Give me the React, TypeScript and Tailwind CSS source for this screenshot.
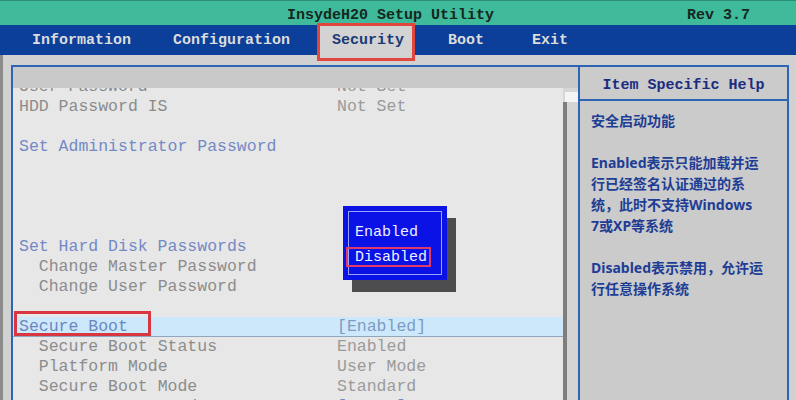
import React from "react";

const mono = { fontFamily: '"Liberation Mono", "DejaVu Sans Mono", monospace' };
const cjk = { fontFamily: '"Noto Sans", "Noto Sans CJK SC", sans-serif' };

type Row = { label?: string; value?: string; kind?: "blue" | "grey" | "sel"; indent?: boolean };

const rows: Row[] = [
  { label: "User Password", value: "Not Set", kind: "grey" },
  { label: "HDD Password IS", value: "Not Set", kind: "grey" },
  {},
  { label: "Set Administrator Password", kind: "blue" },
  {},
  {},
  {},
  {},
  { label: "Set Hard Disk Passwords", kind: "blue" },
  { label: "Change Master Password", kind: "grey", indent: true },
  { label: "Change User Password", kind: "grey", indent: true },
  {},
  { label: "Secure Boot", value: "[Enabled]", kind: "sel" },
  { label: "Secure Boot Status", value: "Enabled", kind: "grey", indent: true },
  { label: "Platform Mode", value: "User Mode", kind: "grey", indent: true },
  { label: "Secure Boot Mode", value: "Standard", kind: "grey", indent: true },
  { label: "Reset to Setup Mode", value: "[Enter]", kind: "blue" },
];

function ListRow({ r }: { r: Row }) {
  const sel = r.kind === "sel";
  const labelColor =
    r.kind === "blue" ? "text-[#7389c6]" : sel ? "text-[#6a87c0]" : "text-[#8c8c8c]";
  const valueColor = sel ? "text-[#7d9cc2]" : r.kind === "blue" ? "text-[#7389c6]" : "text-[#9a9a9a]";
  return (
    <div
      className={`relative flex h-[20px] items-center text-[16.5px] leading-[20px] ${
        sel ? "bg-[#cde8fb] border-b border-[#8fa6bd]" : ""
      }`}
    >
      <span className={`w-[324px] shrink-0 whitespace-pre pl-[6px] ${labelColor}`}>
        {r.indent ? "  " : ""}
        {r.label ?? ""}
      </span>
      <span className={`whitespace-pre ${valueColor}`}>{r.value ?? ""}</span>
      {sel && (
        <div className="absolute left-[1px] top-[-6px] h-[25px] w-[137px] border-[3px] border-[#d9373f]" />
      )}
    </div>
  );
}

export default function App() {
  return (
    <div className="flex h-[400px] w-[796px] flex-col overflow-hidden bg-[#d1d1d1]" style={mono}>
      {/* title bar */}
      <div className="flex h-[25px] shrink-0 items-center border-t border-[#2c8f78] bg-[#3fba9b] pt-[6px] text-[15px] font-bold text-[#14281e]">
        <span className="pl-[287px]">InsydeH20 Setup Utility</span>
        <span className="ml-auto pr-[46px]">Rev 3.7</span>
      </div>
      {/* menu bar */}
      <div className="flex h-[30px] shrink-0 items-center bg-[#0b3f99] text-[15px] font-bold text-[#dcdcdc]">
        <span className="pl-[32px] pt-[2px]">Information</span>
        <span className="pl-[42px] pt-[2px]">Configuration</span>
        <span className="relative ml-[28px] flex h-full w-[96px] items-center bg-[#d3d3d3] pl-[14px] pt-[2px] text-[#1b3a78]">
          Security
          <div className="absolute left-[-1px] right-[-1px] top-[-2px] bottom-[-6px] border-[3px] border-[#e0473f]" />
        </span>
        <span className="pl-[34px] pt-[2px]">Boot</span>
        <span className="pl-[48px] pt-[2px]">Exit</span>
      </div>
      {/* main */}
      <div className="flex flex-1 border-l-[3px] border-[#8c8c8c] pl-[8px] pt-[10px]">
        {/* left panel */}
        <div className="flex w-[567px] shrink-0 flex-col border-l-2 border-t-2 border-[#2e64b4]">
          <div className="h-[21px] shrink-0 bg-[#c9c9c9]" />
          <div className="flex flex-1">
            <div className="relative w-[550px] shrink-0 overflow-hidden bg-[#e7e7e7]">
              <div className="mt-[-11px] flex flex-col">
                {rows.map((r, i) => (
                  <ListRow key={i} r={r} />
                ))}
              </div>
              {/* popup */}
              <div className="absolute left-[339px] top-[130px] h-[74px] w-[104px] bg-[#4d4d4f]" />
              <div className="absolute left-[330px] top-[118px] h-[74px] w-[104px] bg-[#0b12e6] p-[5px]">
                <div className="flex h-full flex-col border border-[#9aa2ff] pt-[8px] pl-[6px] text-[15px] leading-[25px] text-[#eef0ff]">
                  <span>Enabled</span>
                  <span className="relative">
                    Disabled
                    <div className="absolute left-[-9px] right-[10px] top-[2px] h-[20px] border-2 border-[#e03a6a]" />
                  </span>
                </div>
              </div>
            </div>
            <div className="flex w-[15px] shrink-0 flex-col bg-[#d6d6d6]">
              <div className="h-[4px]" />
              <div className="ml-[2px] h-[10px] bg-[#f4f4f4]" />
              <div className="flex-1 border-l-[4px] border-[#7e7e7e] bg-[#d4d4d4]" />
            </div>
          </div>
        </div>
        {/* right panel */}
        <div className="flex w-[211px] shrink-0 flex-col border-2 border-b-0 border-[#2e64b4] bg-[#cbcbcb]">
          <div className="flex h-[34px] shrink-0 items-center justify-center border-b-2 border-[#2e64b4] pt-[6px] text-[15px] font-bold text-[#1c2c80]">
            Item Specific Help
          </div>
          <div
            className="pl-[11px] pt-[9px] text-[14px] font-bold leading-[21px] text-[#1e3d94]"
            style={cjk}
          >
            <div>安全启动功能</div>
            <div className="h-[21px]" />
            <div>Enabled表示只能加载并运</div>
            <div>行已经签名认证通过的系</div>
            <div>统，此时不支持Windows</div>
            <div>7或XP等系统</div>
            <div className="h-[21px]" />
            <div>Disabled表示禁用，允许运</div>
            <div>行任意操作系统</div>
          </div>
        </div>
      </div>
    </div>
  );
}
